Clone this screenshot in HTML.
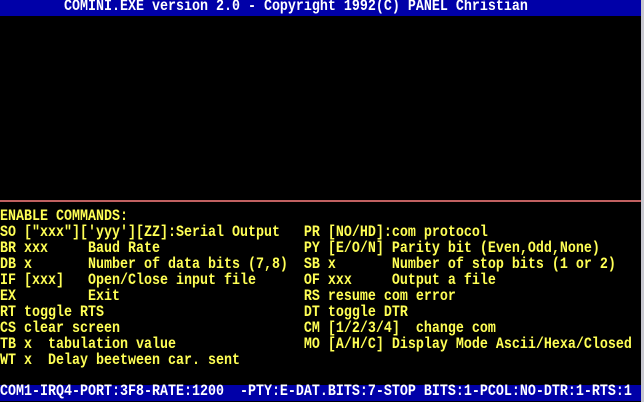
<!DOCTYPE html>
<html><head><style>
html,body{margin:0;padding:0;}
body{width:644px;height:402px;background:#000;position:relative;overflow:hidden;font-family:"Liberation Mono",monospace;font-weight:bold;font-size:13.333px;}
.r{position:absolute;left:0;height:16px;line-height:16px;white-space:pre;color:#ffff55;}
.r span{display:inline-block;transform:scaleY(1.2);transform-origin:50% 60%;}
.bar{position:absolute;left:0;width:641px;height:16px;background:#0000a8;}
.edge{position:absolute;right:0;top:0;width:3px;height:402px;background:#c8c8d0;}
.w{color:#fff;}
.c{top:2px;}
</style></head><body>
<div class="bar" style="top:0"></div>
<div class="bar" style="top:385px"></div>
<div style="position:absolute;left:0;top:200px;width:641px;height:2px;background:#c06060"></div>
<div class="edge"></div>
<div class="r w" style="top:0"><span>        COMINI.EXE version 2.0 - Copyright 1992(C) PANEL Christian</span></div>
<div class="r" style="top:210px"><span>ENABLE COMMANDS:</span></div>
<div class="r" style="top:226px"><span>SO ["xxx"]['yyy'][ZZ]:Serial Output   PR [NO/HD]:com protocol</span></div>
<div class="r" style="top:242px"><span>BR xxx     Baud Rate                  PY [E/O/N] Parity bit (Even,Odd,None)</span></div>
<div class="r" style="top:258px"><span>DB x       Number of data bits (7,8)  SB x       Number of stop bits (1 or 2)</span></div>
<div class="r" style="top:274px"><span>IF [xxx]   Open/Close input file      OF xxx     Output a file</span></div>
<div class="r" style="top:290px"><span>EX         Exit                       RS resume com error</span></div>
<div class="r" style="top:306px"><span>RT toggle RTS                         DT toggle DTR</span></div>
<div class="r" style="top:322px"><span>CS clear screen                       CM [1/2/3/4]  change com</span></div>
<div class="r" style="top:338px"><span>TB x  tabulation value                MO [A/H/C] Display Mode Ascii/Hexa/Closed</span></div>
<div class="r" style="top:354px"><span>WT x  Delay beetween car. sent</span></div>
<div class="r w" style="top:385px"><span>COM1-IRQ4-PORT:3F8-RATE:1200  -PTY:E-DAT.BITS:7-STOP BITS:1-PCOL:NO-DTR:1-RTS:1</span></div>
</body></html>
